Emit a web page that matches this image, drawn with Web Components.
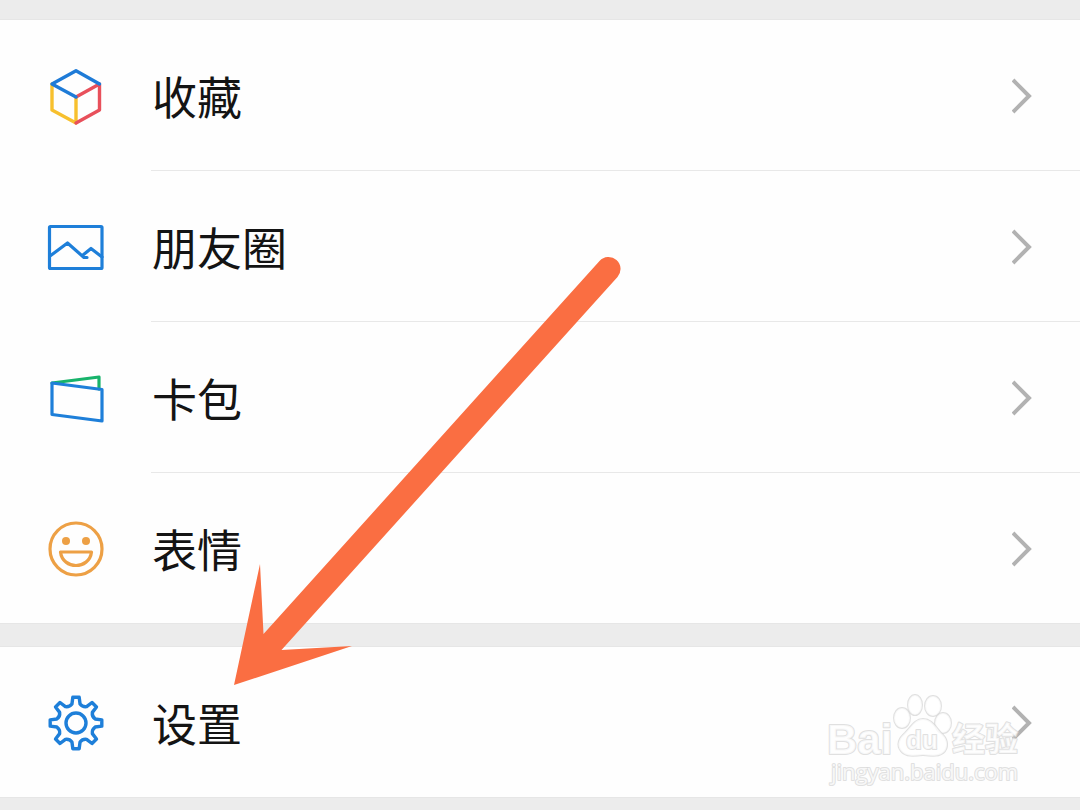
<!DOCTYPE html>
<html lang="zh-CN">
<head>
<meta charset="utf-8">
<meta name="viewport" content="width=device-width, initial-scale=1">
<title>设置</title>
<style>
html, body { margin: 0; background: #ececec; }
body { font-family: "Noto Sans CJK SC", "Noto Sans", sans-serif; color: #141414; }
</style>
</head>
<body>
<menu-page>
  <menu-group>
    <menu-row><menu-icon slot="icon" name="cube"></menu-icon>收藏</menu-row>
    <menu-row><menu-icon slot="icon" name="photo"></menu-icon>朋友圈</menu-row>
    <menu-row><menu-icon slot="icon" name="cards"></menu-icon>卡包</menu-row>
    <menu-row><menu-icon slot="icon" name="smile"></menu-icon>表情</menu-row>
  </menu-group>
  <menu-group>
    <menu-row><menu-icon slot="icon" name="gear"></menu-icon>设置</menu-row>
  </menu-group>
  <pointer-arrow slot="overlay"></pointer-arrow>
  <site-watermark slot="overlay"></site-watermark>
</menu-page>

<script>
const define = (name, html, setup) => {
  const template = document.createElement('template');
  template.innerHTML = html;
  customElements.define(name, class extends HTMLElement {
    constructor() {
      super();
      this.attachShadow({ mode: 'open' }).append(template.content.cloneNode(true));
    }
    connectedCallback() { if (setup) setup(this); }
  });
};

define('menu-page', `
  <style>
    :host { display: block; position: relative; padding: 20px 0 13px; background: #ececec; }
    main { display: flex; flex-direction: column; gap: 24px; }
  </style>
  <main><slot></slot></main>
  <slot name="overlay"></slot>`);

define('menu-group', `
  <style>
    :host { display: block; background: #fefefe; box-shadow: 0 0 0 1px #e6e6e6; }
    nav { display: flex; flex-direction: column; }
    ::slotted(:not(:last-child)) { --divider: 1px solid #e8e8e8; }
  </style>
  <nav><slot></slot></nav>`);

define('menu-row', `
  <style>
    :host { display: block; }
    a { display: flex; align-items: stretch; gap: 48px; padding-left: 48px; color: inherit; text-decoration: none; }
    .icon { display: flex; align-items: center; padding-top: 2px; }
    .body { flex: 1; display: flex; align-items: center; justify-content: space-between;
      box-sizing: content-box; height: 150px; padding-right: 48px; margin-left: -1px; border-bottom: var(--divider, 0); }
    .label { font-size: 45px; line-height: 60px; padding: 1px 0 0 1px; }
    svg { width: 20px; height: 36px; padding-top: 2px; fill: none; stroke: #b2b2b2; stroke-width: 4; }
  </style>
  <a href="#">
    <span class="icon"><slot name="icon"></slot></span>
    <span class="body">
      <span class="label"><slot></slot></span>
      <svg viewBox="0 0 20 36" aria-hidden="true"><path d="M1 2 17 18 1 34"/></svg>
    </span>
  </a>`);

const gearPath = (() => {
  const points = [];
  for (let i = 0; i < 8; i++) {
    const mid = i * 45 - 90;
    for (const [offset, radius] of [[-12, 19.5], [-7, 26], [7, 26], [12, 19.5]]) {
      const angle = (mid + offset) * Math.PI / 180;
      points.push((28 + radius * Math.cos(angle)).toFixed(2) + ' ' + (28 + radius * Math.sin(angle)).toFixed(2));
    }
  }
  let d = 'M' + points[0];
  for (let i = 0; i < 8; i++) {
    const p = k => points[(i * 4 + k) % 32];
    d += 'L' + p(1) + 'L' + p(2) + 'L' + p(3) + 'A7 7 0 0 0 ' + p(4);
  }
  return d + 'Z';
})();

const icons = {
  cube: `<g stroke-width="3.4"><path stroke="#f7c02e" d="M4 15V41L28 54V28"/><path stroke="#e8505b" d="M28 54 51.5 41V15L28 28"/><path stroke="#1e7bd7" d="M4 15 28 1.8 51.5 15M4 15 28 28"/></g>`,
  photo: `<g stroke="#1e7fd9"><rect x="1.5" y="6.5" width="52.5" height="42" rx="1"/><path d="M2 36 19.5 23 36 37.500H39M35 35 43 28.5 54 37"/></g>`,
  cards: `<path stroke="#18b36b" d="M4 12 51 6V18"/><path stroke="#1e7fd9" d="M4 12 54 18.5V50L4 43.5Z"/>`,
  smile: `<g stroke="#eda045"><circle cx="28" cy="28" r="26"/><path d="M12.500 31H43.500C42.500 40 35 44.500 28 44.500S13.500 40 12.500 31Z"/><g fill="#eda045" stroke="none"><circle cx="18" cy="20" r="4"/><circle cx="38" cy="20" r="4"/></g></g>`,
  gear: `<g stroke="#1e7fd9" stroke-width="3.4"><path d="${gearPath}"/><circle cx="28" cy="28" r="10"/></g>`
};

define('menu-icon', `
  <style>
    :host { display: block; }
    svg { display: block; width: 56px; height: 56px; overflow: visible; }
  </style>
  <svg viewBox="0 0 56 56" fill="none" stroke-width="3.2" stroke-linejoin="round" stroke-linecap="round" aria-hidden="true"></svg>`,
  el => { el.shadowRoot.querySelector('svg').innerHTML = icons[el.getAttribute('name')]; });

define('pointer-arrow', `
  <style>
    :host { display: block; position: absolute; left: 230px; top: 250px; pointer-events: none; }
    svg { display: block; width: 400px; height: 440px; fill: #fa6e42; }
  </style>
  <svg viewBox="230 250 400 440" aria-hidden="true"><path d="M234 685 260 564 263.500 634 599.500 261A12 12 0 0 1 617.500 277L281.500 650 352 646Z"/></svg>`);

define('site-watermark', `
  <style>
    :host { display: block; position: absolute; right: 55px; bottom: 20px; pointer-events: none; }
    svg { display: block; width: 200px; height: 100px; overflow: visible; }
    text, path, ellipse { fill: #fff; fill-opacity: .75; stroke: #d8d8d8; stroke-opacity: .8; stroke-width: 2; paint-order: stroke; stroke-linejoin: round; }
    .brand { font: bold 42px "Liberation Sans", sans-serif; }
    .du { font: bold 26px "Liberation Sans", sans-serif; }
    .cn { font: bold 33px "Noto Sans CJK SC", sans-serif; }
    .url { font: 22px "Open Sans", sans-serif; }
  </style>
  <svg viewBox="0 0 200 100">
    <text class="brand" x="2" y="64">Bai</text>
    <ellipse cx="77" cy="28" rx="8" ry="10"/>
    <ellipse cx="90" cy="15" rx="7" ry="10"/>
    <ellipse cx="108" cy="16" rx="8" ry="10"/>
    <ellipse cx="118" cy="33" rx="8" ry="10"/>
    <path d="M98 29C106 29 110 36 116 43C122 48 124 55 120 61C115 67 107 66 98 65C89 66 81 67 76 61C71 55 74 48 80 43C86 37 90 29 98 29Z"/>
    <text class="du" x="81" y="59">du</text>
    <text class="cn" x="127" y="61">经验</text>
    <text class="url" x="6" y="90">jingyan.baidu.com</text>
  </svg>`);
</script>
</body>
</html>
